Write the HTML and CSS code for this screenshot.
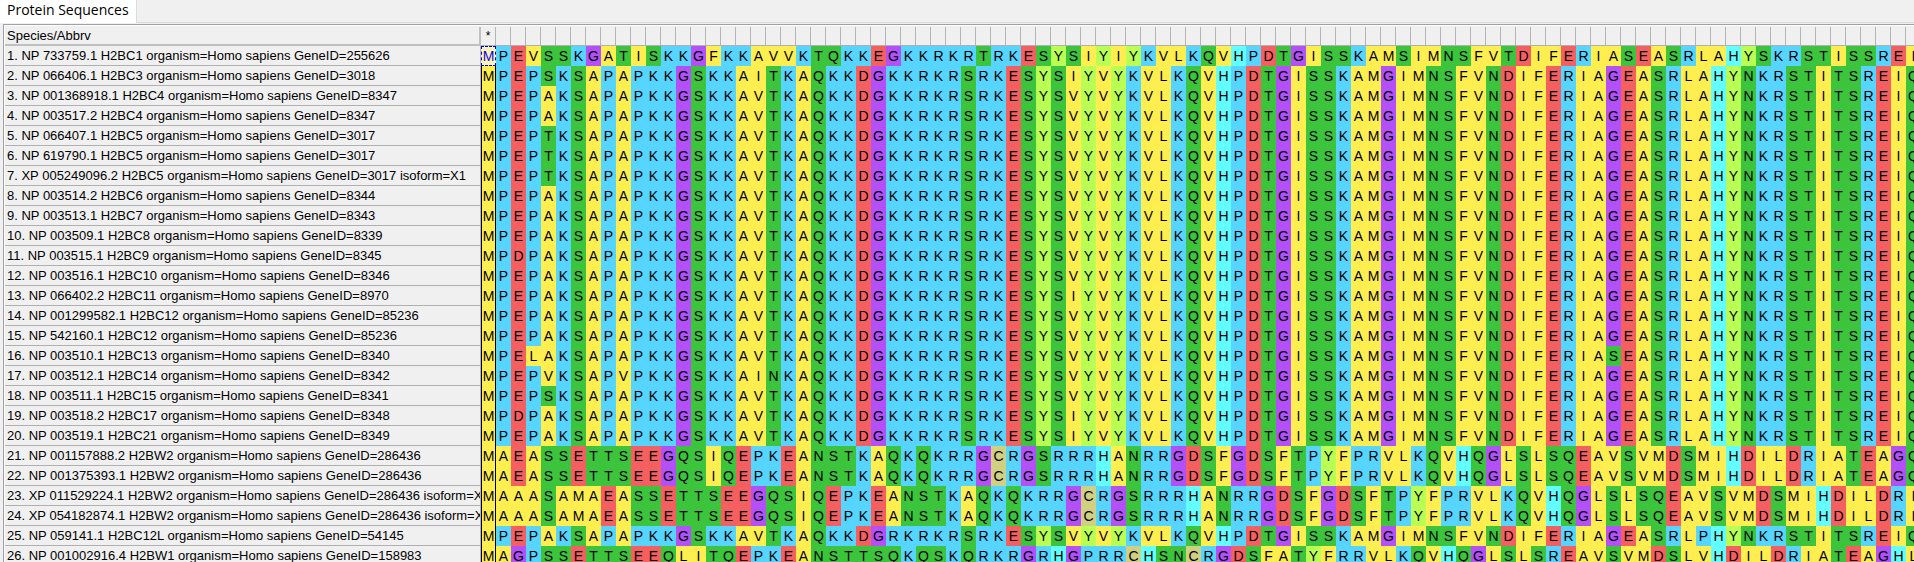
FILE: index.html
```html
<!DOCTYPE html>
<html lang="en">
<head>
<meta charset="utf-8">
<title>Protein Sequences</title>
<link rel="stylesheet" href="styles.css">
</head>
<body>
<div class="tabs" role="tablist">
  <button class="tab" type="button" role="tab" aria-selected="true">Protein Sequences</button>
</div>
<main class="viewer">
  <table class="alignment">
    <thead>
      <tr class="ruler"><th class="name" scope="col">Species/Abbrv</th></tr>
    </thead>
    <tbody></tbody>
  </table>
</main>
<script src="alignment.js"></script>
</body>
</html>
```

FILE: styles.css
```css
* { box-sizing: border-box; }

body {
  margin: 0;
  height: 100vh;
  overflow: hidden;
  display: flex;
  flex-direction: column;
  background: #f0f0f0;
  color: #000;
  font-family: "Liberation Sans", Arial, sans-serif;
}

.tabs {
  flex: none;
  display: flex;
  height: 23px;
  border-bottom: 1px solid #dcdcdc;
}

.tab {
  height: 23px;
  padding: 0 7px 4px 7px;
  border: 0;
  border-right: 1px solid #dcdcdc;
  background: #fff;
  color: #000;
  font: 14px/18px "Open Sans", "Noto Sans", sans-serif;
  white-space: nowrap;
}

.viewer {
  flex: 1;
  min-height: 0;
  margin: 1px 0 0 3px;
  padding-top: 2px;
  border-top: 1px solid #a0a0a8;
  border-left: 1px solid #a0a0a8;
  box-shadow: inset 1px 1px 0 #fff;
  overflow: hidden;
}

.alignment {
  table-layout: fixed;
  width: 0;
  margin-left: 1px;
  border-collapse: separate;
  border-spacing: 0;
}

th, td {
  height: 20px;
  padding: 0;
  overflow: hidden;
  white-space: nowrap;
  font-weight: normal;
}

.ruler th {
  height: 19px;
  border-bottom: 1px solid #b0b0b0;
  border-right: 1px solid #b4b4b4;
  font-size: 12px;
  line-height: 16px;
  text-align: center;
}

.name {
  width: 476px;
  padding-left: 2px;
  border-right: 1px solid #b4b4b4;
  border-bottom: 1px solid #b0b0b0;
  font-size: 13px;
  line-height: 19px;
  text-align: left;
}

.ruler .name {
  border-right: 2px solid #c0c0c0;
  border-bottom: 2px solid #c0c0c0;
  font-size: 13px;
  text-align: left;
}

.site { width: 15px; }

.residue {
  font-size: 14px;
  line-height: 20px;
  text-align: center;
}

.anchor {
  border-left: 1px solid #000;
  border-right: 1px solid #000;
}

.hydrophobic { background: #ffee4f; }
.basic { background: #55d5ff; }
.acidic { background: #f55f5f; }
.polar { background: #3cc53c; }
.glycine { background: #b350fa; }
.tyrosine { background: #b9ff54; }
.histidine { background: #63ffff; }
.cysteine { background: #d0cf82; }

.selected {
  border: 1px dashed #0000d0;
  background: #f8f4b4;
  color: #1400e6;
  line-height: 18px;
}
```

FILE: alignment.js
```js
const sequences = [
  ["NP 733759.1 H2BC1", "255626", "MPEVSSKGATISKKGFKKAVVKTQKKEGKKRKRTRKESYSIYIYKVLKQVHPDTGISSKAMSIMNSFVTDIFERIASEASRLAHYSKRSTISSREI"],
  ["NP 066406.1 H2BC3", "3018", "MPEPSKSAPAPKKGSKKAITKAQKKDGKKRKRSRKESYSIYVYKVLKQVHPDTGISSKAMGIMNSFVNDIFERIAGEASRLAHYNKRSTITSREIQ"],
  ["NP 001368918.1 H2BC4", "8347", "MPEPAKSAPAPKKGSKKAVTKAQKKDGKKRKRSRKESYSVYVYKVLKQVHPDTGISSKAMGIMNSFVNDIFERIAGEASRLAHYNKRSTITSREIQ"],
  ["NP 003517.2 H2BC4", "8347", "MPEPAKSAPAPKKGSKKAVTKAQKKDGKKRKRSRKESYSVYVYKVLKQVHPDTGISSKAMGIMNSFVNDIFERIAGEASRLAHYNKRSTITSREIQ"],
  ["NP 066407.1 H2BC5", "3017", "MPEPTKSAPAPKKGSKKAVTKAQKKDGKKRKRSRKESYSVYVYKVLKQVHPDTGISSKAMGIMNSFVNDIFERIAGEASRLAHYNKRSTITSREIQ"],
  ["NP 619790.1 H2BC5", "3017", "MPEPTKSAPAPKKGSKKAVTKAQKKDGKKRKRSRKESYSVYVYKVLKQVHPDTGISSKAMGIMNSFVNDIFERIAGEASRLAHYNKRSTITSREIQ"],
  ["XP 005249096.2 H2BC5", "3017 isoform=X1", "MPEPTKSAPAPKKGSKKAVTKAQKKDGKKRKRSRKESYSVYVYKVLKQVHPDTGISSKAMGIMNSFVNDIFERIAGEASRLAHYNKRSTITSREIQ"],
  ["NP 003514.2 H2BC6", "8344", "MPEPAKSAPAPKKGSKKAVTKAQKKDGKKRKRSRKESYSVYVYKVLKQVHPDTGISSKAMGIMNSFVNDIFERIAGEASRLAHYNKRSTITSREIQ"],
  ["NP 003513.1 H2BC7", "8343", "MPEPAKSAPAPKKGSKKAVTKAQKKDGKKRKRSRKESYSVYVYKVLKQVHPDTGISSKAMGIMNSFVNDIFERIAGEASRLAHYNKRSTITSREIQ"],
  ["NP 003509.1 H2BC8", "8339", "MPEPAKSAPAPKKGSKKAVTKAQKKDGKKRKRSRKESYSVYVYKVLKQVHPDTGISSKAMGIMNSFVNDIFERIAGEASRLAHYNKRSTITSREIQ"],
  ["NP 003515.1 H2BC9", "8345", "MPDPAKSAPAPKKGSKKAVTKAQKKDGKKRKRSRKESYSVYVYKVLKQVHPDTGISSKAMGIMNSFVNDIFERIAGEASRLAHYNKRSTITSREIQ"],
  ["NP 003516.1 H2BC10", "8346", "MPEPAKSAPAPKKGSKKAVTKAQKKDGKKRKRSRKESYSVYVYKVLKQVHPDTGISSKAMGIMNSFVNDIFERIAGEASRLAHYNKRSTITSREIQ"],
  ["NP 066402.2 H2BC11", "8970", "MPEPAKSAPAPKKGSKKAVTKAQKKDGKKRKRSRKESYSIYVYKVLKQVHPDTGISSKAMGIMNSFVNDIFERIAGEASRLAHYNKRSTITSREIQ"],
  ["NP 001299582.1 H2BC12", "85236", "MPEPAKSAPAPKKGSKKAVTKAQKKDGKKRKRSRKESYSVYVYKVLKQVHPDTGISSKAMGIMNSFVNDIFERIAGEASRLAHYNKRSTITSREIQ"],
  ["NP 542160.1 H2BC12", "85236", "MPEPAKSAPAPKKGSKKAVTKAQKKDGKKRKRSRKESYSVYVYKVLKQVHPDTGISSKAMGIMNSFVNDIFERIAGEASRLAHYNKRSTITSREIQ"],
  ["NP 003510.1 H2BC13", "8340", "MPELAKSAPAPKKGSKKAVTKAQKKDGKKRKRSRKESYSVYVYKVLKQVHPDTGISSKAMGIMNSFVNDIFERIASEASRLAHYNKRSTITSREIQ"],
  ["NP 003512.1 H2BC14", "8342", "MPEPVKSAPVPKKGSKKAINKAQKKDGKKRKRSRKESYSVYVYKVLKQVHPDTGISSKAMGIMNSFVNDIFERIAGEASRLAHYNKRSTITSREIQ"],
  ["NP 003511.1 H2BC15", "8341", "MPEPSKSAPAPKKGSKKAVTKAQKKDGKKRKRSRKESYSVYVYKVLKQVHPDTGISSKAMGIMNSFVNDIFERIAGEASRLAHYNKRSTITSREIQ"],
  ["NP 003518.2 H2BC17", "8348", "MPDPAKSAPAPKKGSKKAVTKAQKKDGKKRKRSRKESYSIYVYKVLKQVHPDTGISSKAMGIMNSFVNDIFERIAGEASRLAHYNKRSTITSREIQ"],
  ["NP 003519.1 H2BC21", "8349", "MPEPAKSAPAPKKGSKKAVTKAQKKDGKKRKRSRKESYSIYVYKVLKQVHPDTGISSKAMGIMNSFVNDIFERIAGEASRLAHYNKRSTITSREIQ"],
  ["NP 001157888.2 H2BW2", "286436", "MAEASSETTSEEGQSIQEPKEANSTKAQKQKRRGCRGSRRRHANRRGDSFGDSFTPYFPRVLKQVHQGLSLSQEAVSVMDSMIHDILDRIATEAGQ"],
  ["NP 001375393.1 H2BW2", "286436", "MAEASSETTSEEGQSIQEPKEANSTKAQKQKRRGCRGSRRRHANRRGDSFGDSFTPYFPRVLKQVHQGLSLSQEAVSVMDSMIHDILDRIATEAGQ"],
  ["XP 011529224.1 H2BW2", "286436 isoform=X1", "MAAASAMAEASSETTSEEGQSIQEPKEANSTKAQKQKRRGCRGSRRRHANRRGDSFGDSFTPYFPRVLKQVHQGLSLSQEAVSVMDSMIHDILDRI"],
  ["XP 054182874.1 H2BW2", "286436 isoform=X2", "MAAASAMAEASSETTSEEGQSIQEPKEANSTKAQKQKRRGCRGSRRRHANRRGDSFGDSFTPYFPRVLKQVHQGLSLSQEAVSVMDSMIHDILDRI"],
  ["NP 059141.1 H2BC12L", "54145", "MPEPAKSAPAPKKGSKKAVTKAQKKDGRKRKRSRKESYSVYVYKVLKQVHPDTGISSKAMGIMNSFVNDIFERIAGEASRLPHYNKRSTITSREIQ"],
  ["NP 001002916.4 H2BW1", "158983", "MAGPSSETTSEEQLITQEPKEANSTTSQKQSKQRKRGRHGPRRCHSNCRGDSFATYFRRVLKQVHQGLSLSREAVSVMDSLVHDILDRIATEAGHL"]
];

const groups = {
  hydrophobic: "AVILMFW",
  basic: "KRP",
  acidic: "DE",
  polar: "STNQ",
  glycine: "G",
  tyrosine: "Y",
  histidine: "H",
  cysteine: "C"
};

const groupOf = {};
for (const [group, letters] of Object.entries(groups)) {
  for (const letter of letters) groupOf[letter] = group;
}

function addCell(row, tag, className, text) {
  const cell = document.createElement(tag);
  cell.className = className;
  cell.textContent = text;
  row.append(cell);
  return cell;
}

const ruler = document.querySelector(".ruler");
const siteCount = Math.max(...sequences.map((entry) => entry[2].length));
for (let site = 0; site < siteCount; site++) {
  addCell(ruler, "th", "site", site === 0 ? "*" : "");
}

const body = document.querySelector(".alignment tbody");
sequences.forEach(([name, gene, residues], index) => {
  const row = document.createElement("tr");
  const label = `${index + 1}. ${name} organism=Homo sapiens GeneID=${gene}`;
  addCell(row, "th", "name", label).scope = "row";
  [...residues].forEach((letter, site) => {
    const cell = addCell(row, "td", `residue ${groupOf[letter]}`, letter);
    if (site === 0) cell.classList.add("anchor");
    if (site === 0 && index === 0) cell.classList.add("selected");
  });
  body.append(row);
});
```
